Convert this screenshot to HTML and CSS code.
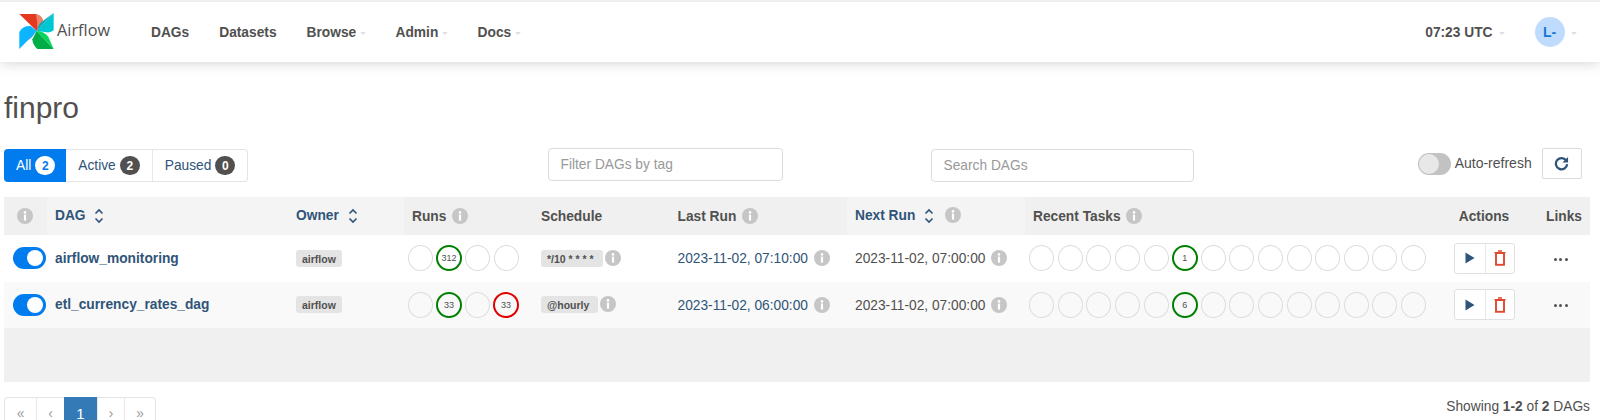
FILE: index.html
```html
<!DOCTYPE html>
<html lang="en">
<head>
<meta charset="utf-8">
<title>finpro</title>
<link rel="stylesheet" href="styles.css">
</head>
<body>
<svg class="sprites" width="0" height="0" aria-hidden="true">
  <defs>
    <symbol id="info" viewBox="0 0 16 16">
      <circle cx="8" cy="8" r="8" fill="#c6c6c6"/>
      <circle cx="8" cy="4.4" r="1.3" fill="#fff"/>
      <rect x="6.9" y="6.6" width="2.2" height="6" fill="#fff"/>
    </symbol>
    <symbol id="sort" viewBox="0 0 10 18">
      <path d="M1.5 6.5 5 3l3.5 3.5M1.5 11.5 5 15l3.5-3.5" fill="none" stroke="#2f5478" stroke-width="1.6"/>
    </symbol>
    <symbol id="play" viewBox="0 0 10 12">
      <path d="M0.5 0.5 9.5 6 0.5 11.5z" fill="#2f5478"/>
    </symbol>
    <symbol id="trash" viewBox="0 0 12 16">
      <path d="M4 1h4M0.5 2.8h11" stroke="#e0492f" stroke-width="1.5" fill="none"/>
      <rect x="2" y="3" width="8" height="11.8" fill="none" stroke="#e0492f" stroke-width="1.9"/>
    </symbol>
  </defs>
</svg>

<header class="topbar">
  <a class="brand">
    <svg class="logo" viewBox="0 0 105 110" aria-hidden="true">
      <path d="M0 3H50Q70 8 72 24L53 55z" fill="#e43921"/>
      <path d="M50 3Q70 8 72 24L53 55Q58 30 50 3z" fill="#f0826a"/>
      <path d="M105 0V53Q95 62 78 58L53 55z" fill="#00c7d4"/>
      <path d="M105 0L53 55Q58 30 75 22z" fill="#11a9b5"/>
      <path d="M105 110H55Q40 95 40 80L53 55z" fill="#00ad46"/>
      <path d="M105 110L53 55Q75 55 88 72z" fill="#04d659"/>
      <path d="M0 110V58Q12 38 35 40L53 55z" fill="#0cb6ff"/>
      <path d="M0 110L53 55Q40 75 25 85z" fill="#017cee"/>
    </svg>
    <span class="brand-name">Airflow</span>
  </a>
  <nav class="nav">
    <a class="nav-item">DAGs</a>
    <a class="nav-item">Datasets</a>
    <a class="nav-item">Browse<i class="caret"></i></a>
    <a class="nav-item">Admin<i class="caret"></i></a>
    <a class="nav-item">Docs<i class="caret"></i></a>
  </nav>
  <div class="nav-right">
    <a class="nav-item">07:23 UTC<i class="caret"></i></a>
    <a class="user"><span class="avatar">L-</span><i class="caret"></i></a>
  </div>
</header>

<main class="page">
  <h2 class="title">finpro</h2>

  <div class="toolbar">
    <div class="pills">
      <a class="pill pill-on">All <span class="count count-on">2</span></a>
      <a class="pill">Active <span class="count">2</span></a>
      <a class="pill">Paused <span class="count">0</span></a>
    </div>
    <div class="field field-tag">Filter DAGs by tag</div>
    <div class="field field-search">Search DAGs</div>
    <div class="refresh">
      <span class="switch switch-off"></span>
      <span class="refresh-label">Auto-refresh</span>
      <button class="refresh-btn" type="button" aria-label="Refresh">
        <svg viewBox="0 0 16 16" width="15" height="15" aria-hidden="true">
          <path d="M13.2 5.2A6 6 0 1 0 14 8.6" fill="none" stroke="#2f5478" stroke-width="2.4"/>
          <path d="M15 1v6h-6z" fill="#2f5478"/>
        </svg>
      </button>
    </div>
  </div>

  <div class="table-wrap">
    <table class="dags">
      <colgroup>
        <col class="c-info"><col class="c-dag"><col class="c-owner"><col class="c-runs"><col class="c-sched">
        <col class="c-last"><col class="c-next"><col class="c-tasks"><col class="c-actions"><col class="c-links">
      </colgroup>
      <thead>
        <tr>
          <th class="th-info"><svg class="ico"><use href="#info"/></svg></th>
          <th class="th-soft link">DAG <svg class="sort"><use href="#sort"/></svg></th>
          <th class="th-soft link">Owner <svg class="sort"><use href="#sort"/></svg></th>
          <th>Runs <svg class="ico"><use href="#info"/></svg></th>
          <th>Schedule</th>
          <th>Last Run <svg class="ico"><use href="#info"/></svg></th>
          <th class="th-soft link">Next Run <svg class="sort"><use href="#sort"/></svg> <svg class="ico"><use href="#info"/></svg></th>
          <th>Recent Tasks <svg class="ico"><use href="#info"/></svg></th>
          <th class="center">Actions</th>
          <th class="center">Links</th>
        </tr>
      </thead>
      <tbody>
        <tr class="row">
          <td class="td-switch"><span class="switch"></span></td>
          <td><a class="dag-name">airflow_monitoring</a></td>
          <td><span class="tag">airflow</span></td>
          <td class="td-runs">
            <div class="dots">
              <span class="dot"></span><span class="dot dot-ok">312</span><span class="dot"></span><span class="dot"></span>
            </div>
          </td>
          <td><span class="tag tag-sched">*/10 * * * *</span> <svg class="ico"><use href="#info"/></svg></td>
          <td><a class="date-link">2023-11-02, 07:10:00</a> <svg class="ico"><use href="#info"/></svg></td>
          <td>2023-11-02, 07:00:00 <svg class="ico"><use href="#info"/></svg></td>
          <td class="td-tasks">
            <div class="dots">
              <span class="dot"></span><span class="dot"></span><span class="dot"></span><span class="dot"></span><span class="dot"></span>
              <span class="dot dot-ok">1</span>
              <span class="dot"></span><span class="dot"></span><span class="dot"></span><span class="dot"></span>
              <span class="dot"></span><span class="dot"></span><span class="dot"></span><span class="dot"></span>
            </div>
          </td>
          <td class="center">
            <div class="actions">
              <a class="action"><svg class="play"><use href="#play"/></svg></a>
              <a class="action"><svg class="trash"><use href="#trash"/></svg></a>
            </div>
          </td>
          <td class="td-links"><span class="more"><i></i><i></i><i></i></span></td>
        </tr>
        <tr class="row row-alt">
          <td class="td-switch"><span class="switch"></span></td>
          <td><a class="dag-name">etl_currency_rates_dag</a></td>
          <td><span class="tag">airflow</span></td>
          <td class="td-runs">
            <div class="dots">
              <span class="dot"></span><span class="dot dot-ok">33</span><span class="dot"></span><span class="dot dot-bad">33</span>
            </div>
          </td>
          <td><span class="tag tag-sched">@hourly</span> <svg class="ico"><use href="#info"/></svg></td>
          <td><a class="date-link">2023-11-02, 06:00:00</a> <svg class="ico"><use href="#info"/></svg></td>
          <td>2023-11-02, 07:00:00 <svg class="ico"><use href="#info"/></svg></td>
          <td class="td-tasks">
            <div class="dots">
              <span class="dot"></span><span class="dot"></span><span class="dot"></span><span class="dot"></span><span class="dot"></span>
              <span class="dot dot-ok">6</span>
              <span class="dot"></span><span class="dot"></span><span class="dot"></span><span class="dot"></span>
              <span class="dot"></span><span class="dot"></span><span class="dot"></span><span class="dot"></span>
            </div>
          </td>
          <td class="center">
            <div class="actions">
              <a class="action"><svg class="play"><use href="#play"/></svg></a>
              <a class="action"><svg class="trash"><use href="#trash"/></svg></a>
            </div>
          </td>
          <td class="td-links"><span class="more"><i></i><i></i><i></i></span></td>
        </tr>
      </tbody>
    </table>
    <div class="table-empty"></div>
  </div>

  <div class="foot">
    <ul class="pager">
      <li class="pg pg-a">«</li>
      <li class="pg pg-b">‹</li>
      <li class="pg pg-on">1</li>
      <li class="pg pg-c">›</li>
      <li class="pg pg-a">»</li>
    </ul>
    <p class="showing">Showing <strong>1-2</strong> of <strong>2</strong> DAGs</p>
  </div>
</main>
</body>
</html>
```

FILE: styles.css
```css
* { box-sizing: border-box; }
html, body { margin: 0; height: 420px; overflow: hidden; background: #fff; }
body { font-family: "Liberation Sans", Arial, sans-serif; font-size: 13.75px; color: #51504f; padding-top: 2px; background: #fff; }
.sprites { position: absolute; }
a { color: inherit; text-decoration: none; }

/* top bar */
.topbar { height: 60px; display: flex; align-items: center; background: #fff; box-shadow: 0 0 14px rgba(0,0,0,.2); padding-left: 19px; padding-right: 23.5px; position: relative; }
body::before { content: ""; position: absolute; top: 0; left: 0; right: 0; height: 2px; background: #efefef; z-index: 1; }
.brand { display: flex; align-items: center; width: 132px; }
.logo { width: 35px; height: 36px; margin-top: -2px; }
.brand-name { font-family: "Open Sans", sans-serif; font-size: 16.3px; color: #51504f; margin: -5px 0 0 3px; }
.nav { display: flex; gap: 30px; align-items: center; }
.nav-item { font-weight: 700; font-size: 13.75px; color: #51504f; display: flex; align-items: center; }
.caret { display: inline-block; width: 0; height: 0; margin-left: 3.3px; margin-top: 2px; border-left: 3.5px solid transparent; border-right: 3.5px solid transparent; border-top: 3.5px solid #e2dfe4; }
.nav-right { margin-left: auto; display: flex; align-items: center; gap: 30px; }
.nav-right .caret { margin-left: 6px; }
.user { display: flex; align-items: center; }
.avatar { width: 30px; height: 30px; border-radius: 50%; background: #bfdcff; color: #1976d2; font-weight: 700; font-size: 14px; display: flex; align-items: center; justify-content: center; }

/* page */
.page { padding: 0 10px 0 4px; }
.title { margin: 0; padding-top: 28.6px; height: 86px; font-weight: 400; font-size: 30px; line-height: 33px; color: #51504f; }

.toolbar { display: grid; grid-template-columns: 543.5px 383px 264px 1fr; align-items: start; height: 49px; }
.pills { display: inline-flex; justify-self: start; height: 33px; margin-top: 1px; border: 1px solid #e4e4e4; border-left: 0; border-radius: 4px; }
.pill { display: flex; align-items: center; gap: 4px; padding: 0 12px; color: #2f5478; font-size: 13.75px; border-right: 1px solid #e9e9e9; }
.pill:first-child { border-radius: 4px 0 0 4px; padding: 0 11px 0 12px; }
.pill:last-child { border-right: 0; }
.pill-on { background: #017cee; color: #fff; margin: -1px 0; border-right: 0; }
.count { min-width: 20px; height: 19px; border-radius: 10px; background: #51504f; color: #fff; font-size: 12px; font-weight: 700; display: flex; align-items: center; justify-content: center; }
.count-on { background: #fff; color: #017cee; }
.field { height: 33px; border: 1px solid #dcdcdc; border-radius: 4px; color: #999; font-size: 13.75px; display: flex; align-items: center; padding-left: 12px; }
.field-tag { width: 235.5px; }
.field-search { width: 263.5px; margin-top: 1px; }
.refresh { display: flex; align-items: flex-start; justify-content: flex-end; padding-right: 8.3px; }
.switch { display: inline-block; position: relative; width: 33px; height: 22px; border-radius: 11px; background: #017cee; vertical-align: middle; }
.switch::after { content: ""; position: absolute; top: 3px; right: 3px; width: 16px; height: 16px; border-radius: 50%; background: #fff; }
.switch-off { background: #c2c2c2; margin-top: 5px; }
.switch-off::after { right: auto; left: 1px; top: 1px; width: 20px; height: 20px; background: #e8e8e8; }
.refresh-label { font-size: 14px; margin: 7px 10px 0 4px; }
.refresh-btn { width: 40px; height: 31px; border: 1px solid #dcdcdc; border-radius: 2px; background: #fff; padding: 0; display: flex; align-items: center; justify-content: center; }

/* table */
.table-wrap { background: #f0f0f0; }
.dags { width: 100%; table-layout: fixed; border-collapse: collapse; }
.c-info { width: 43px; }
.c-dag { width: 241px; }
.c-owner { width: 116px; }
.c-runs { width: 129px; }
.c-sched { width: 136.5px; }
.c-last { width: 177.5px; }
.c-next { width: 178px; }
.c-tasks { width: 405px; }
.c-actions { width: 108px; }
.c-links { width: 52px; }
.dags th { height: 38px; padding: 0 8px; text-align: left; font-size: 13.75px; font-weight: 700; background: #f0f0f0; white-space: nowrap; }
.dags th.th-soft { background: #f4f4f4; }
.dags th.link { color: #2f5478; }
.dags th.th-info { padding-left: 11px; }
.dags th.center, .dags td.center { text-align: center; }
.dags td { padding: 0 8px; white-space: nowrap; background: #fff; }
.row { height: 46.5px; }
.dags .row-alt td { background: #f9f9f9; }
.td-switch.td-switch { padding: 0 0 0 9px; }
.td-runs.td-runs { padding: 0 0 0 2px; }
.td-tasks.td-tasks { padding: 0 0 0 2.5px; }
.ico { width: 16px; height: 16px; vertical-align: -3px; margin-left: 2px; }
.sort { width: 10px; height: 18px; vertical-align: -5px; margin-left: 5px; }
.th-soft .ico { margin-left: 7px; }
.dag-name { font-weight: 700; font-size: 13.75px; color: #2f5478; }
.date-link { color: #2f5478; }
.tag { display: inline-block; height: 17px; line-height: 18px; padding: 0 6px; border-radius: 3px; background: #e4e4e4; font-size: 10.5px; font-weight: 700; }
.tag-sched { padding: 0 9px 0 6px; }
.tag-sched + .ico { margin-left: -2px; }

.dots { display: flex; align-items: center; }
.dot { flex: 0 0 28.6px; height: 26px; display: flex; align-items: center; justify-content: center; position: relative; font-size: 9px; color: #51504f; }
.dot::before { content: ""; position: absolute; left: 1.8px; right: 1.8px; top: 0; bottom: 0; border: 1px solid #dddddd; border-radius: 50%; }
.dot-ok::before { left: 1.3px; right: 1.3px; border: 2px solid #008000; }
.dot-bad::before { left: 1.3px; right: 1.3px; border: 2px solid #e00000; }

.actions { display: inline-flex; height: 31px; border: 1px solid #e0e0e0; border-radius: 3px; vertical-align: middle; background: #fff; }
.action { width: 30px; display: flex; align-items: center; justify-content: center; }
.action + .action { width: 29px; border-left: 1px solid #e8e8e8; }
.play { width: 10px; height: 12px; }
.trash { width: 12px; height: 16px; }
.td-links.td-links { text-align: left; padding-left: 15.5px; }
.more { display: inline-flex; gap: 2.5px; vertical-align: middle; }
.more i { width: 3.2px; height: 3.2px; border-radius: 50%; background: #51504f; }

.table-empty { height: 53.7px; }

/* footer */
.foot { display: flex; justify-content: space-between; align-items: flex-start; padding-top: 15.6px; }
.pager { list-style: none; margin: 0; padding: 0; display: flex; border: 1px solid #e4e4e4; border-radius: 4px 4px 0 0; height: 33px; }
.pg { display: flex; align-items: center; justify-content: center; color: #9a9a9a; font-size: 13.75px; line-height: 11px; border-left: 1px solid #e9e9e9; }
.pg-a { width: 31px; }
.pg-b { width: 28px; }
.pg-c { width: 27px; }
.pg:first-child { border-left: 0; }
.pg-on { background: #337ab7; color: #fff; font-size: 15px; width: 33px; margin: -1px 0; border-left: 0; }
.showing { margin: 2px 0 0; font-size: 13.75px; }
.showing strong { font-weight: 700; }
```
